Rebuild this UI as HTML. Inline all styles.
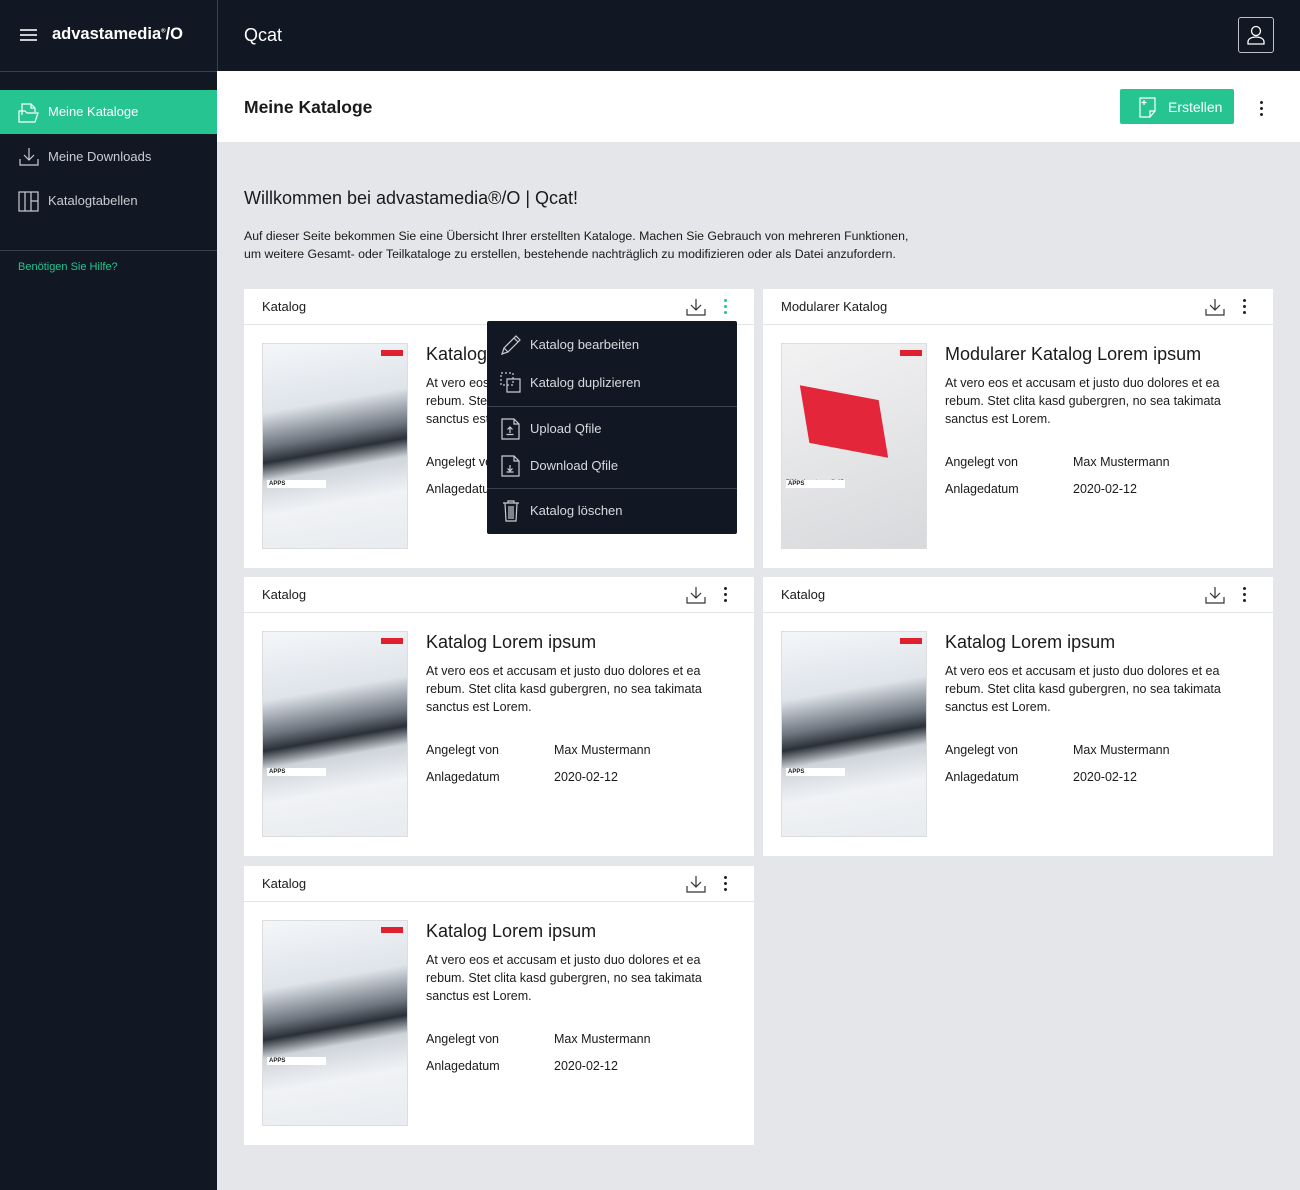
<!DOCTYPE html>
<html><head><meta charset="utf-8"><style>
*{box-sizing:border-box;margin:0;padding:0}
body{width:1300px;height:1190px;background:#e5e6e9;font-family:"Liberation Sans",sans-serif;position:relative;overflow:hidden;color:#1a1a1a}
.side{position:absolute;left:0;top:0;width:217px;height:1190px;background:#111823}
.top{position:absolute;left:217px;top:0;right:0;height:71px;background:#111823;border-left:1px solid #3a414c}
.abs{position:absolute}
.nav{position:absolute;left:0;width:217px;height:44px;color:#c9ccd1;font-size:13px;line-height:44px;padding-left:48px}
.card{position:absolute;background:#fff;width:510px;height:279px}
.ch{height:36px;border-bottom:1px solid #e3e4e7;font-size:13px;line-height:36px;padding-left:18px;position:relative}
.cover{position:absolute;left:18px;top:54px;width:146px;height:206px;border:1px solid #ddd;background:linear-gradient(170deg,#f4f6f9 0%,#dfe4ea 30%,#6e7680 45%,#2a3038 52%,#cfd4da 60%,#f0f2f5 75%,#e8ebef 100%)}
.cover:before{content:"";position:absolute;right:4px;top:6px;width:22px;height:6px;background:#e0202e}
.cover:after{content:"APPS";position:absolute;left:4px;top:136px;font-size:6px;font-weight:bold;background:#fff;padding:1px 2px;width:55px}
.t{position:absolute;left:182px;top:55px;font-size:18px}
.p{position:absolute;left:182px;top:85px;font-size:12.5px;line-height:18px;width:300px}
.m{position:absolute;font-size:12.5px}
.dl{position:absolute;top:9px;right:48px}
.dots{position:absolute;top:10px;right:27px;width:3px}
.dots i{display:block;width:3px;height:3px;border-radius:50%;background:#222;margin-bottom:3px}
.menu{position:absolute;left:487px;top:321px;width:250px;height:213px;background:#111823;border-radius:2px;color:#d7dadf;font-size:13px}
.mi{position:absolute;left:43px}
</style></head><body>
<div class="side">
<div class="abs" style="left:20px;top:29px;width:17px;height:2px;background:#c9ccd1;box-shadow:0 5px 0 #c9ccd1,0 10px 0 #c9ccd1"></div>
<div class="abs" style="left:52px;top:25px;color:#fff;font-size:16.5px;font-weight:bold">advastamedia<sup style="font-size:6px">®</sup>/O</div>
<div class="abs" style="left:0;top:71px;width:217px;height:1px;background:#3a414c"></div>
<div class="nav" style="top:90px;background:#25c490;color:#fff">Meine Kataloge</div>
<svg class="abs" style="left:18px;top:101px" width="22" height="22" fill="none" stroke="#fff" stroke-width="1.2"><path d="M4 14V3h9l4 4v4M13 3v4h4M1 10h6l2 2h11l-3 9H1z"/></svg>
<div class="nav" style="top:135px">Meine Downloads</div>
<svg class="abs" style="left:19px;top:147px" width="20" height="20" fill="none" stroke="#c9ccd1" stroke-width="1.2"><path d="M10 1v12M5 8l5 5 5-5M1 12v6h18v-6"/></svg>
<div class="nav" style="top:179px">Katalogtabellen</div>
<svg class="abs" style="left:18px;top:191px" width="21" height="21" fill="none" stroke="#c9ccd1" stroke-width="1.2"><rect x="1" y="1" width="19" height="19"/><path d="M7 1v19M13 1v19M13 10h7"/></svg>
<div class="abs" style="left:0;top:250px;width:217px;height:1px;background:#3a414c"></div>
<div class="abs" style="left:18px;top:261px;color:#25c490;font-size:11px">Benötigen Sie Hilfe?</div>
</div>
<div class="top">
<div class="abs" style="left:26px;top:25px;color:#fff;font-size:18px">Qcat</div>
<div class="abs" style="left:1020px;top:17px;width:36px;height:36px;border:1.5px solid #bfc3c9;border-radius:3px"></div>
<svg class="abs" style="left:1026px;top:23px" width="24" height="24" fill="none" stroke="#fff" stroke-width="1.3"><circle cx="12" cy="8" r="4.5"/><path d="M4 21v-2c0-3 3-5 8-5s8 2 8 5v2z"/></svg>
</div>
<div class="abs" style="left:217px;top:71px;right:0;height:71px;background:#fff">
<div class="abs" style="left:27px;top:26px;font-size:17.5px;font-weight:bold">Meine Kataloge</div>
<div class="abs" style="left:903px;top:18px;width:114px;height:35px;background:#25c490;border-radius:2px;color:#fff;font-size:14px;line-height:36px;padding-left:48px">Erstellen</div>
<svg class="abs" style="left:922px;top:26px" width="20" height="21" fill="none" stroke="#fff" stroke-width="1.2"><path d="M1 1h15v13l-5 6H1zM16 14h-5v6M5 3v5M2.5 5.5h5"/></svg>
<div class="abs" style="left:1043px;top:30px;width:3px"><i style="display:block;width:3px;height:3px;border-radius:50%;background:#222;margin-bottom:3px"></i><i style="display:block;width:3px;height:3px;border-radius:50%;background:#222;margin-bottom:3px"></i><i style="display:block;width:3px;height:3px;border-radius:50%;background:#222"></i></div>
</div>
<div class="abs" style="left:244px;top:188px;font-size:18px">Willkommen bei advastamedia®/O | Qcat!</div>
<div class="abs" style="left:244px;top:227px;font-size:12.3px;line-height:18px">Auf dieser Seite bekommen Sie eine Übersicht Ihrer erstellten Kataloge. Machen Sie Gebrauch von mehreren Funktionen,<br>um weitere Gesamt- oder Teilkataloge zu erstellen, bestehende nachträglich zu modifizieren oder als Datei anzufordern.</div>

<div class="card" style="left:244px;top:289px"><div class="ch">Katalog<svg class="dl" width="20" height="18" fill="none" stroke="#333" stroke-width="1.2"><path d="M10 1v11M5 7l5 5 5-5M1 11v6h18v-6"/></svg><div class="dots"><i style="background:#25c490"></i><i style="background:#25c490"></i><i style="background:#25c490"></i></div></div><div class="cover"></div><div class="t">Katalog Lorem ipsum</div><div class="p">At vero eos et accusam et justo duo dolores et ea rebum. Stet clita kasd gubergren, no sea takimata sanctus est Lorem.</div><div class="m" style="left:182px;top:166px">Angelegt von</div><div class="m" style="left:310px;top:166px">Max Mustermann</div><div class="m" style="left:182px;top:193px">Anlagedatum</div><div class="m" style="left:310px;top:193px">2020-02-12</div></div>

<div class="card" style="left:763px;top:289px"><div class="ch">Modularer Katalog<svg class="dl" width="20" height="18" fill="none" stroke="#333" stroke-width="1.2"><path d="M10 1v11M5 7l5 5 5-5M1 11v6h18v-6"/></svg><div class="dots"><i></i><i></i><i></i></div></div><div class="cover" style="background:linear-gradient(160deg,#f2f2f3,#d8d9dc)"><div style="position:absolute;left:22px;top:50px;width:80px;height:55px;background:#e3263a;transform:skewY(20deg) rotate(-10deg)"></div><div style="position:absolute;left:4px;top:136px;font-size:6px;font-weight:bold">PIM advastamedia/O</div></div><div class="t">Modularer Katalog Lorem ipsum</div><div class="p">At vero eos et accusam et justo duo dolores et ea rebum. Stet clita kasd gubergren, no sea takimata sanctus est Lorem.</div><div class="m" style="left:182px;top:166px">Angelegt von</div><div class="m" style="left:310px;top:166px">Max Mustermann</div><div class="m" style="left:182px;top:193px">Anlagedatum</div><div class="m" style="left:310px;top:193px">2020-02-12</div></div>

<div class="card" style="left:244px;top:577px"><div class="ch">Katalog<svg class="dl" width="20" height="18" fill="none" stroke="#333" stroke-width="1.2"><path d="M10 1v11M5 7l5 5 5-5M1 11v6h18v-6"/></svg><div class="dots"><i></i><i></i><i></i></div></div><div class="cover"></div><div class="t">Katalog Lorem ipsum</div><div class="p">At vero eos et accusam et justo duo dolores et ea rebum. Stet clita kasd gubergren, no sea takimata sanctus est Lorem.</div><div class="m" style="left:182px;top:166px">Angelegt von</div><div class="m" style="left:310px;top:166px">Max Mustermann</div><div class="m" style="left:182px;top:193px">Anlagedatum</div><div class="m" style="left:310px;top:193px">2020-02-12</div></div>

<div class="card" style="left:763px;top:577px"><div class="ch">Katalog<svg class="dl" width="20" height="18" fill="none" stroke="#333" stroke-width="1.2"><path d="M10 1v11M5 7l5 5 5-5M1 11v6h18v-6"/></svg><div class="dots"><i></i><i></i><i></i></div></div><div class="cover"></div><div class="t">Katalog Lorem ipsum</div><div class="p">At vero eos et accusam et justo duo dolores et ea rebum. Stet clita kasd gubergren, no sea takimata sanctus est Lorem.</div><div class="m" style="left:182px;top:166px">Angelegt von</div><div class="m" style="left:310px;top:166px">Max Mustermann</div><div class="m" style="left:182px;top:193px">Anlagedatum</div><div class="m" style="left:310px;top:193px">2020-02-12</div></div>

<div class="card" style="left:244px;top:866px"><div class="ch">Katalog<svg class="dl" width="20" height="18" fill="none" stroke="#333" stroke-width="1.2"><path d="M10 1v11M5 7l5 5 5-5M1 11v6h18v-6"/></svg><div class="dots"><i></i><i></i><i></i></div></div><div class="cover"></div><div class="t">Katalog Lorem ipsum</div><div class="p">At vero eos et accusam et justo duo dolores et ea rebum. Stet clita kasd gubergren, no sea takimata sanctus est Lorem.</div><div class="m" style="left:182px;top:166px">Angelegt von</div><div class="m" style="left:310px;top:166px">Max Mustermann</div><div class="m" style="left:182px;top:193px">Anlagedatum</div><div class="m" style="left:310px;top:193px">2020-02-12</div></div>

<div class="menu">
<svg class="abs" style="left:13px;top:13px" width="22" height="22" fill="none" stroke="#c9ccd1" stroke-width="1.2"><path d="M2 20l2-6L16 2l4 4L8 18zM4 14l4 4M14 4l4 4"/></svg>
<div class="mi" style="top:16px">Katalog bearbeiten</div>
<svg class="abs" style="left:13px;top:51px" width="22" height="22" fill="none" stroke="#c9ccd1" stroke-width="1.2"><path d="M1 1h12v12H1z" stroke-dasharray="2 2"/><path d="M7 7h13v13H7z"/></svg>
<div class="mi" style="top:54px">Katalog duplizieren</div>
<div class="abs" style="left:0;top:85px;width:250px;height:1px;background:#3a414c"></div>
<svg class="abs" style="left:14px;top:97px" width="20" height="22" fill="none" stroke="#c9ccd1" stroke-width="1.2"><path d="M1 1h12l5 5v15H1zM13 1v5h5M9 15V9M6.5 11.5L9 9l2.5 2.5M5.5 16.5h7"/></svg>
<div class="mi" style="top:100px">Upload Qfile</div>
<svg class="abs" style="left:14px;top:134px" width="20" height="22" fill="none" stroke="#c9ccd1" stroke-width="1.2"><path d="M1 1h12l5 5v15H1zM13 1v5h5M9 10v6M6.5 13.5L9 16l2.5-2.5M5.5 17h7"/></svg>
<div class="mi" style="top:137px">Download Qfile</div>
<div class="abs" style="left:0;top:167px;width:250px;height:1px;background:#3a414c"></div>
<svg class="abs" style="left:15px;top:179px" width="18" height="22" fill="none" stroke="#c9ccd1" stroke-width="1.2"><path d="M1 3h16M6 3V1h6v2M3 3l1 18h10l1-18M7 6v13M9 6v13M11 6v13"/></svg>
<div class="mi" style="top:182px">Katalog löschen</div>
</div>
</body></html>
